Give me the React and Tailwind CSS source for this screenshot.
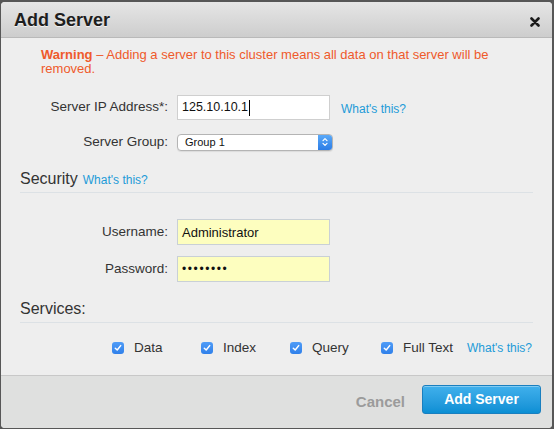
import React from 'react';

const Check = () => (
    <span className="w-[12px] h-[12px] rounded-[3px] bg-gradient-to-b from-[#4f9cf7] to-[#2f80ea] flex items-center justify-center shrink-0">
        <svg width="8" height="8" viewBox="0 0 8 8" fill="none">
            <path d="M1.3 4.2 L3.2 6 L6.7 1.6" stroke="white" strokeWidth="1.5" strokeLinecap="round" strokeLinejoin="round" />
        </svg>
    </span>
);

const Link = ({ className = '' }) => (
    <span className={`text-[12px] text-[#1d9bd8] ${className}`}>What's this?</span>
);

const FormRow = ({ label, children, className = '' }) => (
    <div className={`flex items-center ${className}`}>
        <span className="w-[168px] text-right text-[13.5px] text-[#333] pr-[1px]">{label}</span>
        <div className="ml-[8px] flex items-center">{children}</div>
    </div>
);

const Heading = ({ children }) => (
    <div className="mx-[19px] border-b border-[#dce1e5] pb-[3px] flex items-baseline gap-[5px]">
        {children}
    </div>
);

const App = () => {
    const services = [
        { name: 'Data', w: 'w-[89px]' },
        { name: 'Index', w: 'w-[89px]' },
        { name: 'Query', w: 'w-[91px]' },
    ];

    return (
        <div className="w-[554px] h-[429px] bg-[#575757] pt-[2px] pl-[1px] font-['Liberation_Sans',Arial,sans-serif]">
            <div className="w-[551px] h-[426px] flex flex-col bg-[#eeeeee] rounded-[4px] overflow-hidden">
                {/* header */}
                <div className="h-[36px] shrink-0 flex items-center justify-between pl-[13px] pr-[12px] bg-gradient-to-b from-[#e6e6e6] to-[#cdcdcd] border-b border-[#b9b9b9]">
                    <h1 className="text-[18px] font-bold text-[#1e1e1e] [text-shadow:0_1px_0_#f2f2f2] leading-none">Add Server</h1>
                    <svg width="10" height="10" viewBox="0 0 10 10" className="mt-[4px]">
                        <path d="M1.5 1.5 L8.5 8.5 M8.5 1.5 L1.5 8.5" stroke="#1a1a1a" strokeWidth="2.6" strokeLinecap="round" />
                    </svg>
                </div>

                {/* body */}
                <div className="flex-1 pt-[10px]">
                    <p className="pl-[40px] pr-[28px] text-[13px] leading-[14px] text-[#ef5a2b]">
                        <span className="font-bold">Warning</span> – Adding a server to this cluster means all data on that server will be removed.
                    </p>

                    <FormRow label="Server IP Address*:" className="mt-[19px]">
                        <div className="w-[153px] h-[25px] bg-white border border-[#cfcfcf] flex items-center pl-[4px] text-[12.5px] text-[#111]">
                            125.10.10.1<span className="w-px h-[16px] bg-black ml-px" />
                        </div>
                        <Link className="ml-[11px] mt-[2px]" />
                    </FormRow>

                    <FormRow label="Server Group:" className="mt-[12px]">
                        <div className="w-[156px] h-[17px] bg-white border border-[#b4b4b4] rounded-[4px] flex items-center overflow-hidden shadow-[0_1px_1px_rgba(0,0,0,0.08)]">
                            <span className="flex-1 pl-[7px] text-[11px] text-[#111]">Group 1</span>
                            <span className="w-[14px] h-full bg-gradient-to-b from-[#5aa9f8] to-[#2c7de6] flex items-center justify-center">
                                <svg width="6" height="10" viewBox="0 0 6 10" fill="none">
                                    <path d="M1 3.6 L3 1.6 L5 3.6 M1 6.4 L3 8.4 L5 6.4" stroke="white" strokeWidth="1.2" strokeLinecap="round" strokeLinejoin="round" />
                                </svg>
                            </span>
                        </div>
                    </FormRow>

                    <div className="mt-[17px]">
                        <Heading>
                            <span className="text-[16px] leading-[20px] text-[#333]">Security</span>
                            <Link />
                        </Heading>
                    </div>

                    <FormRow label="Username:" className="mt-[26px]">
                        <div className="w-[153px] h-[26px] bg-[#fdfebf] border border-[#c9d0d6] flex items-center pl-[4px] text-[13px] text-[#111]">
                            Administrator
                        </div>
                    </FormRow>

                    <FormRow label="Password:" className="mt-[11px]">
                        <div className="w-[153px] h-[26px] bg-[#fdfebf] border border-[#c9d0d6] flex items-center pl-[4px] text-[12px] tracking-[1.6px] text-[#111]">
                            ••••••••
                        </div>
                    </FormRow>

                    <div className="mt-[17px]">
                        <Heading>
                            <span className="text-[16px] leading-[20px] text-[#333]">Services:</span>
                        </Heading>
                    </div>

                    <div className="mt-[15px] h-[20px] flex items-center pl-[111px] text-[13.5px] text-[#333]">
                        {services.map(s => (
                            <label key={s.name} className={`${s.w} flex items-center gap-[10px]`}>
                                <Check />
                                <span>{s.name}</span>
                            </label>
                        ))}
                        <label className="flex items-center gap-[10px]">
                            <Check />
                            <span>Full Text</span>
                        </label>
                        <Link className="ml-[14px]" />
                    </div>
                </div>

                {/* footer */}
                <div className="h-[53px] shrink-0 border-t border-[#c8c8c8] bg-[#dfe0df] flex items-start justify-end pt-[9px] pr-[11px] gap-[17px]">
                    <span className="text-[15px] font-bold text-[#9b9b9b] mt-[6px]">Cancel</span>
                    <button className="w-[119px] h-[29px] rounded-[3px] border border-[#1a7fbf] bg-gradient-to-b from-[#3fb0ec] to-[#0a8fd4] text-white text-[14px] font-bold shadow-[inset_0_1px_0_rgba(255,255,255,0.35)]">
                        Add Server
                    </button>
                </div>
            </div>
        </div>
    );
};

export default App;
